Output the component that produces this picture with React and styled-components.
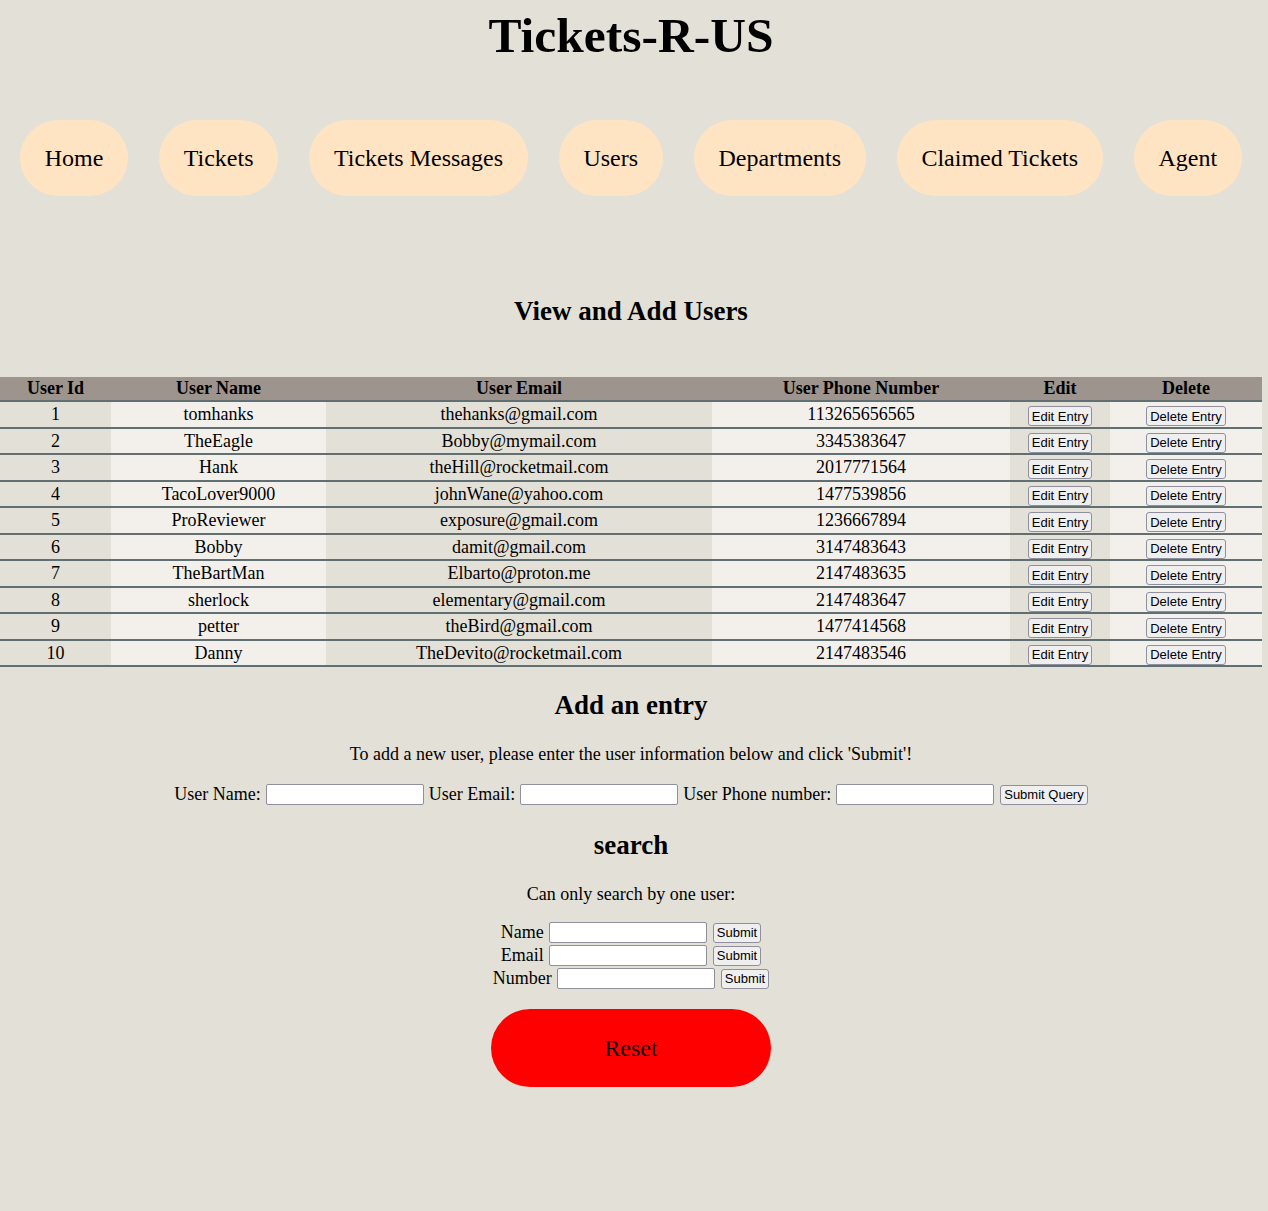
import React from 'react';
import styled, { createGlobalStyle } from 'styled-components';

const GlobalStyle = createGlobalStyle`
  html, body {
    margin: 0;
    padding: 0;
    background-color: #e3e0d8;
    font-family: "Liberation Serif", "Times New Roman", serif;
    font-size: 18px;
    color: #000;
  }
`;

const Page = styled.div`
  width: 1262px;
  display: flex;
  flex-direction: column;
  align-items: center;
  padding-bottom: 124px;
`;

const Title = styled.h1`
  margin: 0;
  padding-top: 7px;
  font-size: 49.5px;
  line-height: 57px;
  font-weight: bold;
`;

const Nav = styled.nav`
  align-self: stretch;
  display: flex;
  gap: 31px;
  padding-left: 20px;
  margin-top: 56px;
`;

const NavPill = styled.a`
  display: block;
  background-color: #ffe4c4;
  border-radius: 40px;
  padding: 0 24.7px;
  height: 76px;
  line-height: 76px;
  font-size: 24px;
  color: #000;
  text-decoration: none;
`;

const Heading = styled.h2`
  margin: ${(p) => p.$top}px 0 0;
  font-size: 27px;
  line-height: 31px;
  font-weight: bold;
`;

const Table = styled.table`
  margin-top: 50px;
  width: 1262px;
  table-layout: fixed;
  border-collapse: collapse;
`;

const HeadCell = styled.th`
  background-color: #9d948e;
  height: 23px;
  padding: 0;
  font-weight: bold;
  font-size: 18px;
  line-height: 23px;
  border-bottom: 2px solid #5f6f72;
`;

const Row = styled.tr`
  border-bottom: 2px solid #5f6f72;
`;

const Cell = styled.td`
  height: 24.5px;
  padding: 0;
  text-align: center;
  line-height: 24px;
  background-color: ${(p) => (p.$light ? '#f3f0eb' : '#e3e0d8')};
`;

const SmallButton = styled.button`
  font-family: "Liberation Sans", Arial, sans-serif;
  font-size: 13px;
  height: 20px;
  padding: 0 3px;
  margin: 0;
  background-color: #efeff0;
  color: #000;
  border: 1px solid #8f8f9d;
  border-radius: 3px;
  vertical-align: middle;
  cursor: pointer;
`;

const Text = styled.p`
  margin: ${(p) => p.$top}px 0 0;
  line-height: 21px;
`;

const FormRow = styled.form`
  display: flex;
  align-items: center;
  justify-content: center;
  gap: 5px;
  height: 23px;
  margin-top: ${(p) => p.$top || 0}px;
`;

const Field = styled.input`
  box-sizing: border-box;
  width: 158px;
  height: 21px;
  margin: 0;
  background: #fff;
  border: 1px solid #8f8f9d;
  border-radius: 2px;
`;

const SearchButton = styled(SmallButton)`
  margin-left: 1px;
`;

const ResetButton = styled.button`
  margin-top: 19px;
  width: 280px;
  height: 78px;
  border: none;
  border-radius: 39px;
  background-color: #ff0000;
  font-family: "Liberation Serif", "Times New Roman", serif;
  font-size: 24px;
  color: #111;
  cursor: pointer;
`;

const links = ['Home', 'Tickets', 'Tickets Messages', 'Users', 'Departments', 'Claimed Tickets', 'Agent'];

const users = [
  [1, 'tomhanks', 'thehanks@gmail.com', '113265656565'],
  [2, 'TheEagle', 'Bobby@mymail.com', '3345383647'],
  [3, 'Hank', 'theHill@rocketmail.com', '2017771564'],
  [4, 'TacoLover9000', 'johnWane@yahoo.com', '1477539856'],
  [5, 'ProReviewer', 'exposure@gmail.com', '1236667894'],
  [6, 'Bobby', 'damit@gmail.com', '3147483643'],
  [7, 'TheBartMan', 'Elbarto@proton.me', '2147483635'],
  [8, 'sherlock', 'elementary@gmail.com', '2147483647'],
  [9, 'petter', 'theBird@gmail.com', '1477414568'],
  [10, 'Danny', 'TheDevito@rocketmail.com', '2147483546'],
];

const widths = [111, 215, 386, 298, 100, 152];

const App = () => {
  return (
    <>
      <GlobalStyle />
      <Page>
        <Title>Tickets-R-US</Title>
        <Nav>
          {links.map((l) => (
            <NavPill key={l} href="#">{l}</NavPill>
          ))}
        </Nav>

        <Heading $top={100}>View and Add Users</Heading>

        <Table>
          <colgroup>
            {widths.map((w, i) => (
              <col key={i} style={{ width: w }} />
            ))}
          </colgroup>
          <thead>
            <tr>
              <HeadCell>User Id</HeadCell>
              <HeadCell>User Name</HeadCell>
              <HeadCell>User Email</HeadCell>
              <HeadCell>User Phone Number</HeadCell>
              <HeadCell>Edit</HeadCell>
              <HeadCell>Delete</HeadCell>
            </tr>
          </thead>
          <tbody>
            {users.map(([id, name, email, phone]) => (
              <Row key={id}>
                <Cell>{id}</Cell>
                <Cell $light>{name}</Cell>
                <Cell>{email}</Cell>
                <Cell $light>{phone}</Cell>
                <Cell>
                  <SmallButton>Edit Entry</SmallButton>
                </Cell>
                <Cell $light>
                  <SmallButton>Delete Entry</SmallButton>
                </Cell>
              </Row>
            ))}
          </tbody>
        </Table>

        <Heading $top={23}>Add an entry</Heading>
        <Text $top={23}>To add a new user, please enter the user information below and click 'Submit'!</Text>
        <FormRow $top={18}>
          <label>User Name:</label>
          <Field type="text" />
          <label>User Email:</label>
          <Field type="text" />
          <label>User Phone number:</label>
          <Field type="text" />
          <SearchButton type="button">Submit Query</SearchButton>
        </FormRow>

        <Heading $top={24}>search</Heading>
        <Text $top={23}>Can only search by one user:</Text>
        <FormRow $top={16}>
          <label>Name</label>
          <Field type="text" />
          <SearchButton type="button">Submit</SearchButton>
        </FormRow>
        <FormRow>
          <label>Email</label>
          <Field type="text" />
          <SearchButton type="button">Submit</SearchButton>
        </FormRow>
        <FormRow>
          <label>Number</label>
          <Field type="text" />
          <SearchButton type="button">Submit</SearchButton>
        </FormRow>

        <ResetButton type="button">Reset</ResetButton>
      </Page>
    </>
  );
};

export default App;
